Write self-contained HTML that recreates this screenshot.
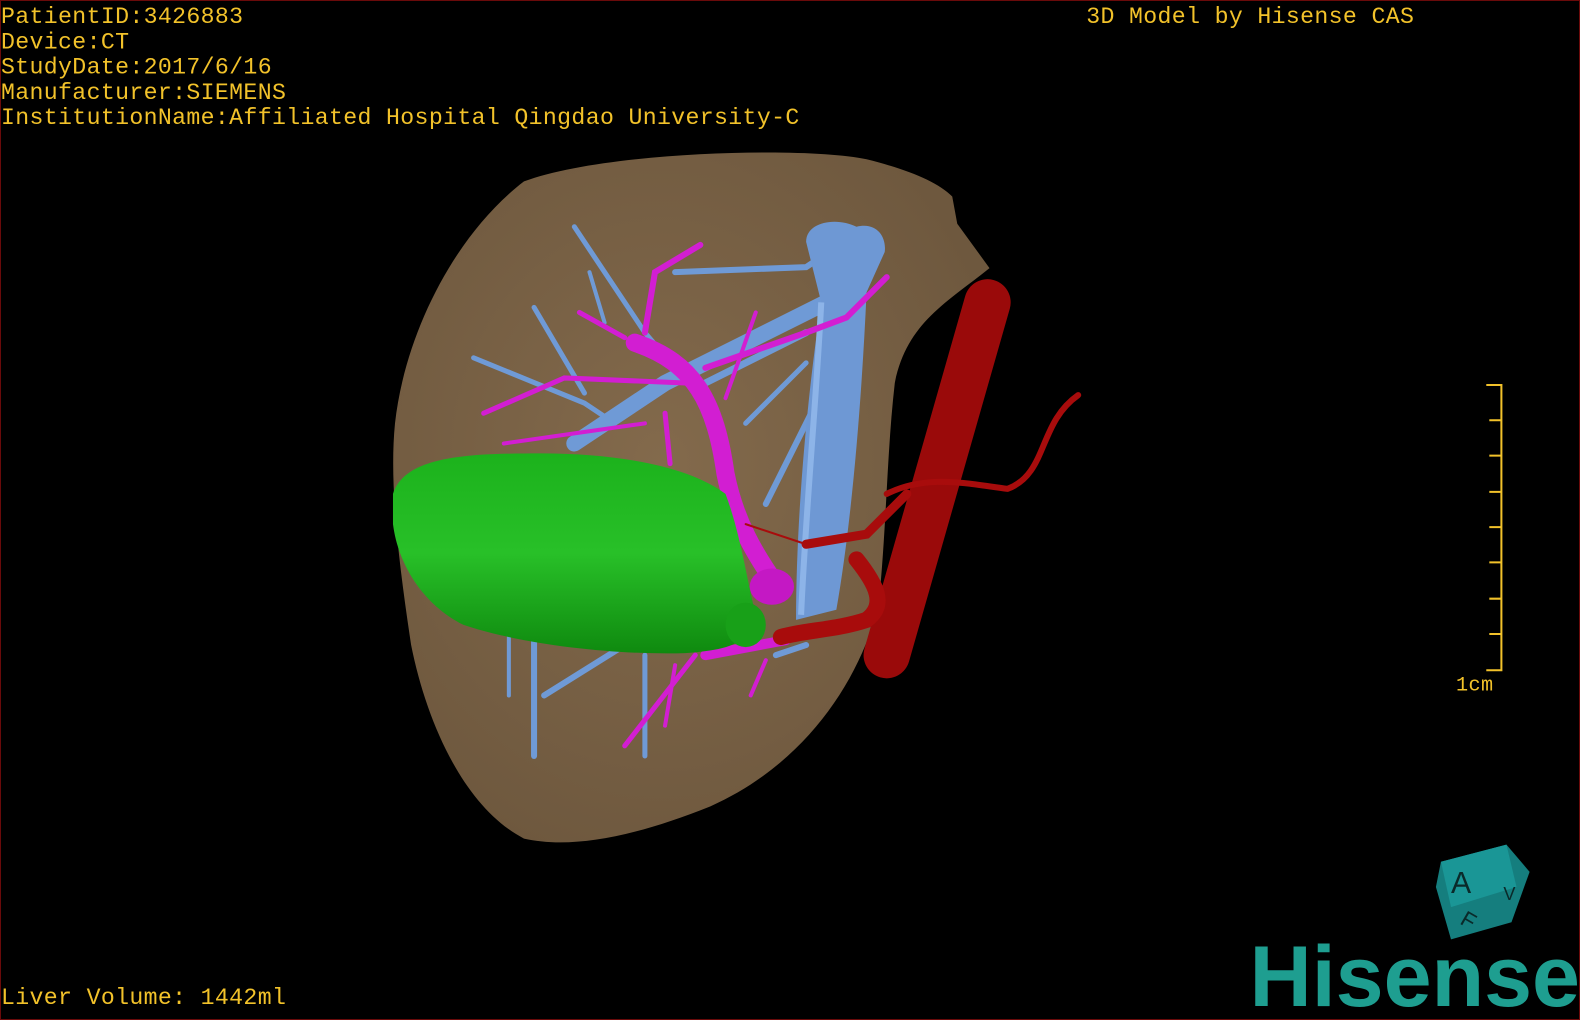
<!DOCTYPE html>
<html><head><meta charset="utf-8"><style>
html,body{margin:0;padding:0;background:#000;}
body{width:1580px;height:1020px;overflow:hidden;position:relative;}
.wrap{position:absolute;left:0;top:0;width:1568px;height:1012px;transform:scale(1.00765,1.0079);transform-origin:0 0;}
.frame{position:absolute;left:0;top:0;width:1578px;height:1018px;border:1px solid #6a0a0a;}
.t{position:absolute;font-family:"Liberation Mono",monospace;color:#f2c22a;font-size:23px;line-height:25px;white-space:pre;letter-spacing:0.35px;}
svg{position:absolute;left:0;top:0;}
</style></head><body>
<div class="wrap">
<svg width="1568" height="1012" viewBox="0 0 1568 1012">
<defs>
<radialGradient id="lv" cx="45%" cy="45%" r="60%"><stop offset="0" stop-color="#836a4c"/><stop offset="1" stop-color="#6e583e"/></radialGradient>
<linearGradient id="gb" x1="0" y1="0" x2="0" y2="1"><stop offset="0" stop-color="#1cb21c"/><stop offset="0.5" stop-color="#28c028"/><stop offset="1" stop-color="#0f8a0f"/></linearGradient>
</defs>
<path d="M520,180 C600,150 800,145 860,158 C900,168 930,180 945,195 L950,222 L982,266 C940,300 900,320 888,380 C880,450 880,520 872,600 C852,680 795,760 705,800 C625,832 565,842 520,832 C462,802 424,720 408,640 C396,560 386,480 392,420 C402,330 452,232 520,180 Z" fill="url(#lv)"/>
<g stroke="#6f9ad6" fill="none" stroke-linecap="round">
<path d="M570,440 L660,380 L820,300" stroke-width="16"/>
<path d="M570,225 L640,330 L700,400" stroke-width="5"/>
<path d="M470,355 L580,400 L610,420" stroke-width="5"/>
<path d="M670,270 L800,265 L815,255" stroke-width="6"/>
<path d="M530,305 L580,390" stroke-width="5"/>
<path d="M700,380 L800,330" stroke-width="7"/>
<path d="M740,420 L800,360" stroke-width="5"/>
<path d="M760,500 L810,400" stroke-width="6"/>
<path d="M530,630 L530,750" stroke-width="6"/>
<path d="M505,620 L505,690" stroke-width="4"/>
<path d="M540,690 L620,640" stroke-width="6"/>
<path d="M640,650 L640,750" stroke-width="5"/>
<path d="M770,650 L800,640" stroke-width="6"/>
<path d="M585,270 L600,320" stroke-width="4"/>
</g>
<path d="M800,240 C800,220 830,215 850,225 C870,220 880,235 878,250 L860,290 C855,400 845,520 830,605 L790,615 C790,520 800,400 815,300 Z" fill="#6e98d4"/>
<path d="M815,300 C810,400 800,500 795,610" stroke="#8db4e8" stroke-width="6" fill="none"/>
<g stroke="#d21ed2" fill="none" stroke-linecap="round">
<path d="M630,340 C690,360 710,400 720,470 C730,520 750,550 770,580" stroke-width="18"/>
<path d="M640,330 L650,270 L695,243" stroke-width="6"/>
<path d="M620,335 L575,310" stroke-width="5"/>
<path d="M700,365 L800,330 L840,315 L880,275" stroke-width="6"/>
<path d="M680,380 L560,375 L480,410" stroke-width="5"/>
<path d="M640,420 L500,440" stroke-width="4"/>
<path d="M720,395 L750,310" stroke-width="4"/>
<path d="M700,650 L780,635" stroke-width="10"/>
<path d="M690,650 L620,740" stroke-width="5"/>
<path d="M670,660 L660,720" stroke-width="4"/>
<path d="M760,655 L745,690" stroke-width="4"/>
<path d="M660,410 L665,460" stroke-width="5"/>
</g>
<ellipse cx="766" cy="582" rx="22" ry="18" fill="#c418c4"/>
<path d="M390,490 C400,460 440,450 520,450 C600,448 680,460 720,490 C735,530 740,570 750,610 C745,640 720,645 680,648 C610,650 520,640 460,620 C420,600 395,560 390,520 Z" fill="url(#gb)"/>
<ellipse cx="740" cy="620" rx="20" ry="22" fill="#18a018"/>
<g stroke="#a80c0c" fill="none" stroke-linecap="round">
<path d="M980,300 L880,650" stroke-width="46" stroke="#9a0a0a"/>
<path d="M880,490 C920,470 960,480 1000,485 C1040,470 1030,420 1070,392" stroke-width="6"/>
<path d="M850,555 C870,580 880,600 860,615 C830,625 800,625 775,632" stroke-width="16"/>
<path d="M800,540 L860,530 L900,490" stroke-width="9"/>
<path d="M740,520 L800,540" stroke-width="2"/>
</g>
<g stroke="#f2c22a" stroke-width="2" fill="none">
<path d="M1475,382 H1490 V665 H1475"/>
<path d="M1478,417 H1490 M1478,452 H1490 M1478,488 H1490 M1478,523 H1490 M1478,558 H1490 M1478,594 H1490 M1478,629 H1490"/>
</g>
<polygon points="1430,855 1495,838 1518,865 1500,915 1440,932 1425,880" fill="#157e7e"/>
<polygon points="1430,855 1495,838 1505,880 1440,900" fill="#1a9696"/>
<text x="1440" y="886" font-family="Liberation Sans,sans-serif" font-size="30" fill="#0a2a2a">A</text>
<text x="1450" y="922" font-family="Liberation Sans,sans-serif" font-size="22" fill="#0a2a2a" transform="rotate(30 1460 915)">F</text>
<text x="1492" y="893" font-family="Liberation Sans,sans-serif" font-size="18" fill="#0a2a2a">V</text>
<text x="1240" y="998" font-family="Liberation Sans,sans-serif" font-weight="bold" font-size="86" fill="#1e9e90" textLength="328" lengthAdjust="spacingAndGlyphs">Hisense</text>
</svg>
<div class="t" style="left:1px;top:5px">PatientID:3426883
Device:CT
StudyDate:2017/6/16
Manufacturer:SIEMENS
InstitutionName:Affiliated Hospital Qingdao University-C</div>
<div class="t" style="left:1078px;top:5px">3D Model by Hisense CAS</div>
<div class="t" style="left:1445px;top:668px;font-size:20px">1cm</div>
<div class="t" style="left:1px;top:978px">Liver Volume: 1442ml</div>
</div>
<div class="frame"></div>
</body></html>
